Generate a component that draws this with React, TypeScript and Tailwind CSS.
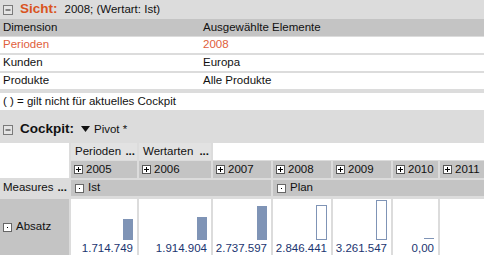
const font = { fontFamily: '"Liberation Sans", Arial, sans-serif' }

function MinusBox() {
  return (
    <svg width="10" height="10" viewBox="0 0 10 10" className="shrink-0">
      <rect x="0.5" y="0.5" width="9" height="9" fill="#e4e4e4" stroke="#7a7a7a" />
      <path d="M2.5 5h5" stroke="#222" />
    </svg>
  )
}

function PlusBox() {
  return (
    <svg width="9" height="9" viewBox="0 0 9 9" className="shrink-0">
      <rect x="0.5" y="0.5" width="8" height="8" fill="#fff" stroke="#555" />
      <path d="M2 4.5h5M4.5 2v5" stroke="#000" />
    </svg>
  )
}

function DotBox() {
  return (
    <svg width="9" height="9" viewBox="0 0 9 9" className="shrink-0">
      <rect x="0.5" y="0.5" width="8" height="8" fill="#fff" stroke="#666" />
      <rect x="4" y="4" width="1" height="1" fill="#000" />
    </svg>
  )
}

const dims = [
  { name: 'Perioden', value: '2008', hl: true },
  { name: 'Kunden', value: 'Europa' },
  { name: 'Produkte', value: 'Alle Produkte' },
]

const years = ['2005', '2006', '2007', '2008', '2009', '2010', '2011']

const values = [
  { v: '1.714.749', h: 21, kind: 'fill' },
  { v: '1.914.904', h: 23, kind: 'fill' },
  { v: '2.737.597', h: 34, kind: 'fill' },
  { v: '2.846.441', h: 35, kind: 'line' },
  { v: '3.261.547', h: 40, kind: 'line' },
  { v: '0,00', h: 1, kind: 'zero' },
]

export default function App() {
  return (
    <div className="w-[484px] h-[255px] overflow-hidden bg-[#dcdcdc] text-[11.5px] text-[#111]" style={font}>
      <div className="h-[19px] flex items-center gap-[7px] pl-[3px]">
        <MinusBox />
        <span className="font-bold text-[13.5px] text-[#d9541e]">Sicht:</span>
        <span>2008; (Wertart: Ist)</span>
      </div>
      <div className="h-[17px] flex items-center bg-[#c4c4c4]">
        <span className="w-[203px] pl-[3px]">Dimension</span>
        <span>Ausgewählte Elemente</span>
      </div>
      <div className="flex flex-col gap-[2px] pt-[1px]">
        {dims.map((d) => (
          <div key={d.name} className={`h-[16px] flex items-center bg-white ${d.hl ? 'text-[#e0603c]' : ''}`}>
            <span className="w-[203px] pl-[3px]">{d.name}</span>
            <span>{d.value}</span>
          </div>
        ))}
      </div>
      <div className="mt-[4px] h-[17px] flex items-center bg-white pl-[3px]">( ) = gilt nicht für aktuelles Cockpit</div>

      <div className="h-[33px] flex items-end pb-[5px] pl-[3px] gap-[7px]">
        <div className="mb-[3px]"><MinusBox /></div>
        <span className="font-bold text-[13.5px] leading-[18px]">Cockpit:</span>
        <span className="flex items-center gap-[4px] leading-[18px]">
          <svg width="9" height="6" viewBox="0 0 9 6"><path d="M0 0h9L4.5 6z" fill="#111" /></svg>
          Pivot *
        </span>
      </div>

      <div className="grid grid-cols-[69px_66px_72px_58px_58px_58px_45px_1fr] grid-rows-[17px_17px_17px_58px] gap-x-[2px] gap-y-[1px]">
        <div className="row-span-2 bg-white" />
        <div className="bg-[#e2e2e2] flex items-center pl-[4px] justify-between pr-[2px]">
          <span>Perioden</span><span className="font-bold">...</span>
        </div>
        <div className="bg-[#e2e2e2] flex items-center pl-[4px] justify-between pr-[2px]">
          <span>Wertarten</span><span className="font-bold">...</span>
        </div>
        <div className="col-span-5 bg-white" />
        {years.map((y) => (
          <div key={y} className="bg-[#c4c4c4] flex items-center gap-[3px] pl-[3px]">
            <PlusBox />
            <span>{y}</span>
          </div>
        ))}
        <div className="bg-[#dcdcdc] flex items-center justify-between pl-[3px] pr-[2px] mt-[1px]">
          <span>Measures</span><span className="font-bold">...</span>
        </div>
        <div className="col-span-3 bg-[#c4c4c4] flex items-center gap-[4px] pl-[4px] mt-[1px]">
          <DotBox /><span>Ist</span>
        </div>
        <div className="col-span-4 bg-[#c4c4c4] flex items-center gap-[4px] pl-[4px] mt-[1px]">
          <DotBox /><span>Plan</span>
        </div>
        <div className="bg-[#c4c4c4] flex items-center gap-[4px] pl-[3px] mt-[2px]">
          <DotBox /><span>Absatz</span>
        </div>
        {values.map((c) => (
          <div key={c.v} className="bg-white flex flex-col mt-[2px]">
            <div className="h-[43px] flex items-end justify-end pr-[4px]">
              {c.kind === 'fill' && <div className="w-[10px] bg-[#7f94b6]" style={{ height: c.h }} />}
              {c.kind === 'line' && <div className="w-[11px] border border-[#7f94b6] bg-white" style={{ height: c.h }} />}
              {c.kind === 'zero' && <div className="w-[10px] h-px bg-[#7f94b6] mb-[1px]" />}
            </div>
            <div className="text-right pr-[4px] leading-[14px] mt-[1px] text-[#1a3470]">{c.v}</div>
          </div>
        ))}
        <div className="bg-white mt-[2px]" />
      </div>
    </div>
  )
}
